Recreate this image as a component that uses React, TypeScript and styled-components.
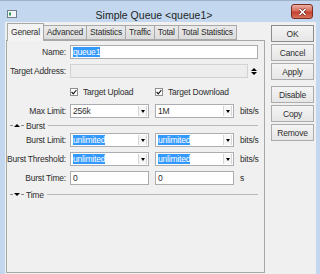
import React from "react";
import styled, { createGlobalStyle } from "styled-components";

const GlobalStyle = createGlobalStyle`
  html, body {
    margin: 0;
    padding: 0;
    width: 320px;
    height: 274px;
    overflow: hidden;
    background: #c3d8ef;
  }
  body {
    font-family: "Liberation Sans", Arial, sans-serif;
    color: #2e2e2e;
  }
  * { box-sizing: border-box; }
`;

const Window = styled.div`
  width: 320px;
  height: 274px;
  display: flex;
  flex-direction: column;
  background: #c3d8ef;
  border-top: 1px solid #9db2c9;
  padding: 0 4px 0 5px;
`;

const TitleBar = styled.div`
  height: 21px;
  display: flex;
  align-items: flex-start;
  flex-shrink: 0;
`;

const AppIcon = styled.svg`
  margin: 9px 0 0 2px;
  flex-shrink: 0;
`;

const Title = styled.div`
  flex: 1;
  text-align: center;
  font-size: 10.5px;
  line-height: 14px;
  margin-top: 7px;
  color: #1e1e1e;
`;

const CloseButton = styled.div`
  width: 22px;
  height: 15px;
  margin: 3px 3px 0 0;
  border: 1px solid #7e2d25;
  border-radius: 3px;
  background: linear-gradient(#eab1a3 0%, #d86c5a 45%, #c5402e 55%, #d8735c 100%);
  display: flex;
  align-items: center;
  justify-content: center;
`;

const Body = styled.div`
  flex: 1;
  display: flex;
  background: #f0f0f0;
  padding-top: 1px;
  font-size: 8.5px;
  letter-spacing: -0.2px;
`;

const LeftColumn = styled.div`
  width: 259px;
  margin-left: 1px;
  display: flex;
  flex-direction: column;
`;

const TabStrip = styled.div`
  height: 17px;
  display: flex;
  align-items: flex-end;
  padding-left: 1px;
  position: relative;
  z-index: 1;
`;

const Tab = styled.div<{ $active?: boolean }>`
  height: ${(p) => (p.$active ? 18 : 15)}px;
  margin-bottom: ${(p) => (p.$active ? -1 : 0)}px;
  margin-left: -1px;
  padding: ${(p) => (p.$active ? "2px" : "0")} 3px 0;
  border: 1px solid #a8a8a8;
  border-bottom: ${(p) => (p.$active ? "none" : "1px solid #a8a8a8")};
  background: ${(p) => (p.$active ? "#f3f3f3" : "linear-gradient(#ebebeb, #dcdcdc)")};
  line-height: 13px;
  white-space: nowrap;
  position: relative;
  z-index: ${(p) => (p.$active ? 2 : 1)};
  &:first-child { margin-left: 0; }
`;

const Panel = styled.div`
  height: 233px;
  border: 1px solid #a8a8a8;
  background: #f0f0f0;
  padding: 3px 0 0 0;
  display: flex;
  flex-direction: column;
`;

const Row = styled.div<{ $mt?: number }>`
  display: flex;
  align-items: center;
  height: 14px;
  margin-top: ${(p) => (p.$mt ?? 5)}px;
`;

const Label = styled.div`
  width: 63px;
  padding-right: 4px;
  text-align: right;
  white-space: nowrap;
`;

const Field = styled.div<{ $w: number; $disabled?: boolean; $gap?: number }>`
  width: ${(p) => p.$w}px;
  height: 14px;
  margin-left: ${(p) => p.$gap ?? 0}px;
  border: 1px solid ${(p) => (p.$disabled ? "#d2d2d2" : "#abadb3")};
  background: ${(p) => (p.$disabled ? "#ededed" : "#ffffff")};
  padding-left: 2px;
  display: flex;
  align-items: center;
  line-height: 11px;
  white-space: nowrap;
`;

const Selected = styled.span`
  background: #3399ff;
  color: #ffffff;
  display: inline-block;
  line-height: 10px;
`;

const DropButton = styled.div`
  margin-left: auto;
  width: 9px;
  height: 10px;
  margin-right: 1px;
  border-left: 1px solid #d6d6d6;
  border-right: 1px solid #d6d6d6;
  background: #f7f7f7;
  display: flex;
  align-items: center;
  justify-content: center;
  &::after {
    content: "";
    border-left: 2.5px solid transparent;
    border-right: 2.5px solid transparent;
    border-top: 3px solid #000;
  }
`;

const Unit = styled.span`
  margin-left: 6px;
`;

const Spinner = styled.div`
  margin-left: 3px;
  display: flex;
  flex-direction: column;
  gap: 1px;
`;

const Arrow = styled.div<{ $up?: boolean }>`
  width: 0;
  height: 0;
  border-left: 3px solid transparent;
  border-right: 3px solid transparent;
  ${(p) => (p.$up ? "border-bottom: 3px solid #000;" : "border-top: 3px solid #000;")}
`;

const CheckItem = styled.div<{ $gap?: number }>`
  width: 79px;
  margin-left: ${(p) => p.$gap ?? 0}px;
  display: flex;
  align-items: center;
  gap: 5px;
  white-space: nowrap;
`;

const Box = styled.div`
  width: 8px;
  height: 8px;
  border: 1px solid #8e8f8f;
  background: #ffffff;
  display: flex;
  align-items: center;
  justify-content: center;
`;

const Header = styled.div<{ $mt?: number }>`
  display: flex;
  align-items: center;
  height: 9px;
  margin-top: ${(p) => p.$mt ?? 3}px;
  padding: 0 6px 0 3px;
`;

const Dash = styled.div`
  width: 3px;
  height: 1px;
  background: #8a8a8a;
`;

const HeaderArrow = styled(Arrow)`
  margin: 0 1px;
`;

const HeaderLabel = styled.span`
  margin: 0 3px 0 2px;
`;

const Rule = styled.div`
  flex: 1;
  height: 1px;
  background: #bababa;
`;

const ButtonColumn = styled.div`
  width: 43px;
  margin-left: 6px;
  padding-top: 2px;
  display: flex;
  flex-direction: column;
  gap: 2px;
`;

const Button = styled.div<{ $mt?: number; $default?: boolean }>`
  height: 17px;
  margin-top: ${(p) => p.$mt ?? 0}px;
  border: 1px solid ${(p) => (p.$default ? "#8c8c8c" : "#acacac")};
  background: linear-gradient(#f4f4f4, #e6e6e6);
  display: flex;
  align-items: center;
  justify-content: center;
`;

const Combo: React.FC<{ value: string; selected?: boolean; gap?: number }> = ({ value, selected, gap }) => (
  <Field $w={79} $gap={gap}>
    {selected ? <Selected>{value}</Selected> : value}
    <DropButton />
  </Field>
);

const Check = () => (
  <Box>
    <svg width="6" height="6" viewBox="0 0 6 6">
      <path d="M0.6 3 L2.3 4.8 L5.4 1" fill="none" stroke="#111" strokeWidth="1.1" />
    </svg>
  </Box>
);

export default function App() {
  return (
    <>
      <GlobalStyle />
      <Window>
        <TitleBar>
          <AppIcon width="10" height="8" viewBox="0 0 10 8">
            <rect x="0.5" y="0.5" width="9" height="7" fill="#f3f5f6" stroke="#6f7f8e" />
            <rect x="2" y="2.5" width="2" height="3" fill="#2f9a52" />
          </AppIcon>
          <Title>Simple Queue &lt;queue1&gt;</Title>
          <CloseButton>
            <svg width="9" height="8" viewBox="0 0 9 8">
              <path d="M1.5 1 L7.5 7 M7.5 1 L1.5 7" stroke="#5a1a14" strokeWidth="2.6" />
              <path d="M1.5 1 L7.5 7 M7.5 1 L1.5 7" stroke="#ffffff" strokeWidth="1.6" />
            </svg>
          </CloseButton>
        </TitleBar>
        <Body>
          <LeftColumn>
            <TabStrip>
              <Tab $active>General</Tab>
              <Tab>Advanced</Tab>
              <Tab>Statistics</Tab>
              <Tab>Traffic</Tab>
              <Tab>Total</Tab>
              <Tab>Total Statistics</Tab>
            </TabStrip>
            <Panel>
              <Row $mt={1}>
                <Label>Name:</Label>
                <Field $w={188}>
                  <Selected>queue1</Selected>
                </Field>
              </Row>
              <Row>
                <Label>Target Address:</Label>
                <Field $w={178} $disabled />
                <Spinner>
                  <Arrow $up />
                  <Arrow />
                </Spinner>
              </Row>
              <Row $mt={7}>
                <Label />
                <CheckItem>
                  <Check />
                  Target Upload
                </CheckItem>
                <CheckItem $gap={6}>
                  <Check />
                  Target Download
                </CheckItem>
              </Row>
              <Row>
                <Label>Max Limit:</Label>
                <Combo value="256k" />
                <Combo value="1M" gap={6} />
                <Unit>bits/s</Unit>
              </Row>
              <Header>
                <Dash />
                <HeaderArrow $up />
                <Dash />
                <HeaderLabel>Burst</HeaderLabel>
                <Rule />
              </Header>
              <Row $mt={3}>
                <Label>Burst Limit:</Label>
                <Combo value="unlimited" selected />
                <Combo value="unlimited" selected gap={6} />
                <Unit>bits/s</Unit>
              </Row>
              <Row>
                <Label>Burst Threshold:</Label>
                <Combo value="unlimited" selected />
                <Combo value="unlimited" selected gap={6} />
                <Unit>bits/s</Unit>
              </Row>
              <Row>
                <Label>Burst Time:</Label>
                <Field $w={79}>0</Field>
                <Field $w={79} $gap={6}>0</Field>
                <Unit>s</Unit>
              </Row>
              <Header $mt={5}>
                <Dash />
                <HeaderArrow />
                <Dash />
                <HeaderLabel>Time</HeaderLabel>
                <Rule />
              </Header>
            </Panel>
          </LeftColumn>
          <ButtonColumn>
            <Button $default>OK</Button>
            <Button>Cancel</Button>
            <Button>Apply</Button>
            <Button $mt={4}>Disable</Button>
            <Button>Copy</Button>
            <Button>Remove</Button>
          </ButtonColumn>
        </Body>
      </Window>
    </>
  );
}
